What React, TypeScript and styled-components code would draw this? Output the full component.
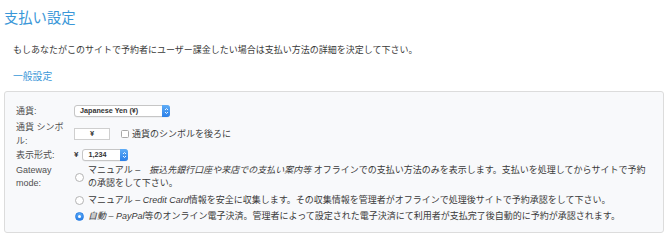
import React from 'react'
import styled, { createGlobalStyle } from 'styled-components'

const GlobalStyle = createGlobalStyle`
  body {
    margin: 0;
    background: #fff;
    font-family: "Liberation Sans", "Noto Sans CJK JP", sans-serif;
    color: #3c3c3c;
  }
`

const Page = styled.div`
  padding: 0 7px 0 4px;
`

const Title = styled.h2`
  margin: 0;
  padding-top: 8px;
  font-size: 14.3px;
  line-height: 20px;
  font-weight: normal;
  color: #3a97d8;
`

const Intro = styled.p`
  margin: 15px 0 0 9px;
  font-size: 9px;
  line-height: 14px;
  color: #3a3a3a;
`

const Section = styled.h3`
  margin: 13px 0 0 9px;
  font-size: 9.8px;
  line-height: 14px;
  font-weight: normal;
  color: #3a97d8;
`

const Panel = styled.div`
  margin-top: 7px;
  background: #f8f9fb;
  border: 1px solid #dcdcdc;
  border-radius: 3px;
  padding: 10px 11px 8px 11px;
  display: grid;
  grid-template-columns: 58px 1fr;
  grid-template-rows: 18px 28px 14px auto;
  align-items: center;
  font-size: 9px;
  line-height: 14px;
`

const Label = styled.div<{ $top?: boolean }>`
  color: #505050;
  padding-right: 4px;
  align-self: ${p => (p.$top ? 'start' : 'center')};
  ${p => (p.$top ? 'padding-top: 1.5px; line-height: 13.5px;' : '')}
`

const Field = styled.div`
  display: flex;
  align-items: center;
  gap: 3px;
`

const SelectBox = styled.div<{ $w: number }>`
  width: ${p => p.$w}px;
  height: 12px;
  box-sizing: border-box;
  background: #fff;
  border: 1px solid #c6c6c6;
  border-radius: 3px;
  display: flex;
  align-items: center;
  justify-content: space-between;
  font-size: 7.2px;
  font-weight: bold;
  color: #333;
  padding-left: 5px;
  box-shadow: 0 0.5px 0.5px rgba(0, 0, 0, 0.08);
`

const Stepper = styled.span`
  width: 8px;
  height: 12px;
  margin-right: -1px;
  border-radius: 0 3px 3px 0;
  background: linear-gradient(#5fadf7, #2a7fe8);
  display: flex;
  align-items: center;
  justify-content: center;
`

const TextInput = styled.div`
  width: 36px;
  height: 12px;
  box-sizing: border-box;
  background: #fff;
  border: 1px solid #cfcfcf;
  font-size: 7.5px;
  font-weight: bold;
  text-align: center;
  line-height: 10px;
  color: #333;
`

const Check = styled.span`
  width: 6px;
  height: 6px;
  margin-left: 8px;
  border: 1px solid #a8a8a8;
  border-radius: 1.5px;
  background: #fff;
`

const Yen = styled.span`
  font-size: 8px;
  font-weight: bold;
  color: #333;
  margin-right: 1px;
`

const RadioList = styled.div`
  align-self: start;
  padding-top: 1.5px;
  display: flex;
  flex-direction: column;
  gap: 3px;
  line-height: 13.5px;
`

const RadioItem = styled.div`
  display: flex;
  align-items: center;
  gap: 4px;
  padding-left: 1px;
`

const Radio = styled.span<{ $on?: boolean }>`
  flex: none;
  width: 9px;
  height: 9px;
  box-sizing: border-box;
  border-radius: 50%;
  border: 1px solid ${p => (p.$on ? '#2a80e6' : '#b4b4b4')};
  background: ${p => (p.$on ? 'linear-gradient(#58a8f6, #2a7fe6)' : '#fff')};
  display: flex;
  align-items: center;
  justify-content: center;
  &::after {
    content: '';
    display: ${p => (p.$on ? 'block' : 'none')};
    width: 3px;
    height: 3px;
    border-radius: 50%;
    background: #fff;
  }
`

const RadioText = styled.span`
  color: #3a3a3a;
  em {
    font-style: italic;
  }
`

const Arrows = () => (
  <svg width="5" height="8" viewBox="0 0 5 8">
    <path d="M1 3 L2.5 1.5 L4 3 M1 5 L2.5 6.5 L4 5" fill="none" stroke="#fff" strokeWidth="0.9" />
  </svg>
)

const Select: React.FC<{ width: number; value: string }> = ({ width, value }) => (
  <SelectBox $w={width}>
    <span>{value}</span>
    <Stepper>
      <Arrows />
    </Stepper>
  </SelectBox>
)

const App: React.FC = () => {
  const modes = [
    {
      on: false,
      text: (
        <>
          マニュアル –　<em>振込先銀行口座や来店での支払い案内等</em> オフラインでの支払い方法のみを表示します。支払いを処理してからサイトで予約
          <br />
          の承認をして下さい。
        </>
      ),
    },
    {
      on: false,
      text: (
        <>
          マニュアル – <em>Credit Card</em>情報を安全に収集します。その収集情報を管理者がオフラインで処理後サイトで予約承認をして下さい。
        </>
      ),
    },
    {
      on: true,
      text: (
        <>
          <em>自動 – PayPal</em>等のオンライン電子決済。管理者によって設定された電子決済にて利用者が支払完了後自動的に予約が承認されます。
        </>
      ),
    },
  ]

  return (
    <Page>
      <GlobalStyle />
      <Title>支払い設定</Title>
      <Intro>もしあなたがこのサイトで予約者にユーザー課金したい場合は支払い方法の詳細を決定して下さい。</Intro>
      <Section>一般設定</Section>
      <Panel>
        <Label>通貨:</Label>
        <Field>
          <Select width={96} value="Japanese Yen (¥)" />
        </Field>

        <Label>通貨 シンボル:</Label>
        <Field>
          <TextInput>¥</TextInput>
          <Check />
          <span>通貨のシンボルを後ろに</span>
        </Field>

        <Label>表示形式:</Label>
        <Field>
          <Yen>¥</Yen>
          <Select width={46} value="1,234" />
        </Field>

        <Label $top>Gateway mode:</Label>
        <RadioList>
          {modes.map((m, idx) => (
            <RadioItem key={idx}>
              <Radio $on={m.on} />
              <RadioText>{m.text}</RadioText>
            </RadioItem>
          ))}
        </RadioList>
      </Panel>
    </Page>
  )
}

export default App
